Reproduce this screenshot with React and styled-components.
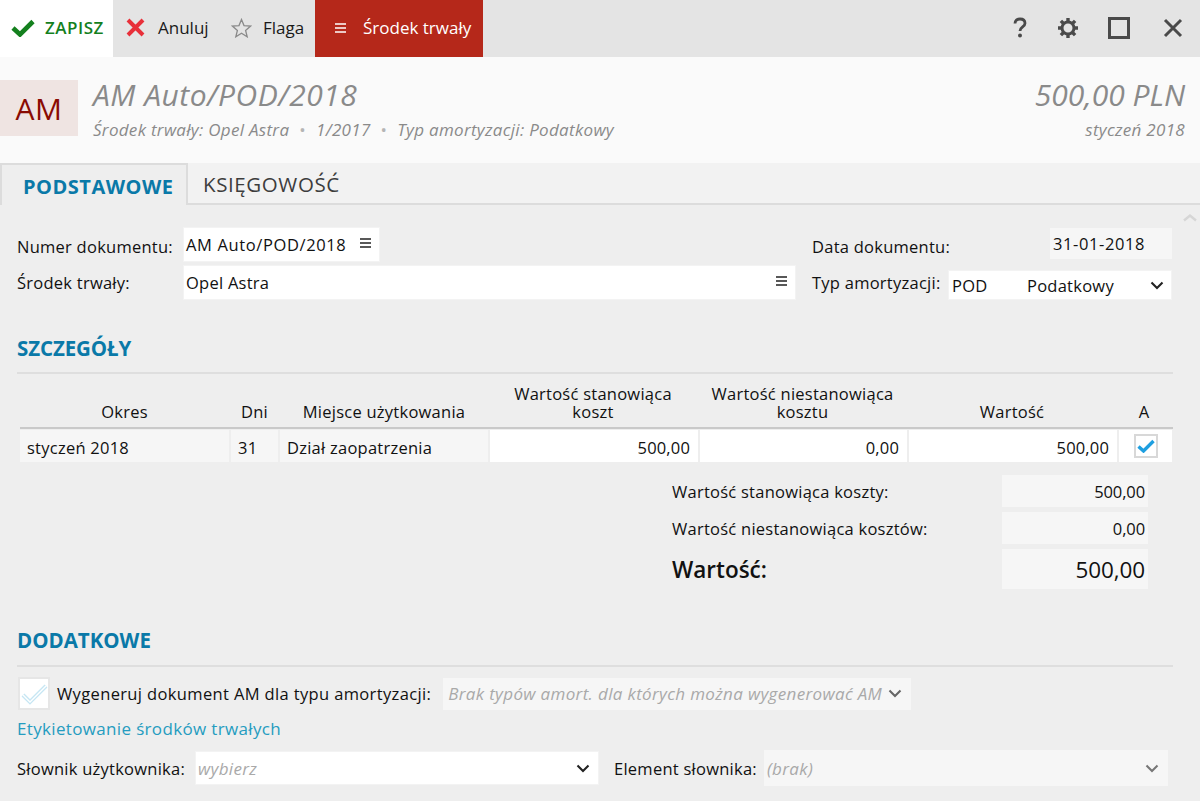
import React from "react";
import styled, { createGlobalStyle } from "styled-components";

const Global = createGlobalStyle`
  html, body { margin: 0; padding: 0; background: #eeeeee; }
  body { font-family: "Open Sans", "Noto Sans", sans-serif; font-size: 16.5px; letter-spacing: 0.25px; color: #111; }
  * { box-sizing: border-box; }
`;
const Page = styled.div`width: 1200px; height: 801px; overflow: hidden; background: #eee;`;
const Toolbar = styled.div`display: flex; height: 57px; background: #e4e4e4; align-items: stretch;`;
const ToolButton = styled.div`
  display: flex; align-items: center; height: 57px; font-size: 17px; letter-spacing: ${p => p.$ls || 0}px;
  width: ${p => p.$w}px; padding: 0 0 2px ${p => p.$pl}px; gap: ${p => p.$gap}px;
  background: ${p => p.$bg || "transparent"}; color: ${p => p.$color || "#1a1a1a"};
  font-weight: ${p => p.$weight || 400};
`;
const ToolRight = styled.div`margin-left: auto; display: flex; align-items: center; padding-bottom: 2px;`;
const IconSlot = styled.div`width: ${p => p.$w}px; display: flex; justify-content: center; align-items: center;`;
const Header = styled.div`height: 106px; background: #fafafa; display: flex; padding-top: 23px;`;
const Badge = styled.div`
  width: 78px; height: 56px; background: #efe4e2; color: #8a0b02; font-size: 30px; letter-spacing: 0.4px;
  display: flex; align-items: center; justify-content: center; flex: none;
`;
const HeaderMain = styled.div`margin-left: 15px; flex: 1; color: #8a8a8a; font-style: italic;`;
const HeaderSide = styled.div`padding-right: 15px; color: #8a8a8a; font-style: italic; text-align: right;`;
const Title = styled.div`font-size: 30px; line-height: 32px; margin-top: -1px; letter-spacing: ${p => p.$ls}px;`;
const Sub = styled.div`font-size: 17px; line-height: 22px; margin-top: 8px; letter-spacing: 0.3px;`;
const Dot = styled.span`margin: 0 10px; color: #b5b5b5; font-style: normal;`;
const Tabs = styled.div`height: 42px; background: #f2f2f2; border-bottom: 2px solid #dcdcdc; display: flex;`;
const ActiveTab = styled.div`
  height: 42px; width: 188px; display: flex; align-items: center; padding: 2px 0 0 21px;
  background: #eee; border: 2px solid #dcdcdc; border-bottom: none;
  color: #0a79a8; font-weight: 700; font-size: 20px; letter-spacing: 0.5px;
`;
const PlainTab = styled.div`
  height: 42px; display: flex; align-items: center; padding-left: 15px;
  color: #3d3d3d; font-size: 20.5px; letter-spacing: 0.6px;
`;
const Body = styled.div`position: relative; padding: 22px 28px 0 17px;`;
const ScrollUp = styled.svg`position: absolute; right: 2px; top: 8px;`;
const FormGrid = styled.div`display: grid; grid-template-columns: 166px 613px 16px 136px 224px; grid-template-rows: 38px 35px;`;
const Label = styled.div`
  display: flex; align-items: center; white-space: nowrap; margin-left: ${p => p.$ml || 0}px; letter-spacing: ${p => p.$ls ?? 0.25}px;
`;
const Field = styled.div`
  display: flex; align-items: center; justify-content: space-between; flex: none;
  background: ${p => p.$off ? "#f6f6f6" : "#fff"};
  border: 1px solid ${p => p.$off ? "#f6f6f6" : "#f3f3f3"};
  padding: 0 ${p => p.$pr ?? 8}px 0 ${p => p.$pl ?? 2}px;
  height: ${p => p.$h}px; width: ${p => p.$w}px; white-space: nowrap;
  margin-left: ${p => p.$ml || 0}px; margin-top: ${p => p.$mt || 0}px;
  color: ${p => p.$muted ? "#a9a9a9" : "#111"}; font-style: ${p => p.$muted ? "italic" : "normal"};
  font-size: ${p => p.$muted ? 17 : 16.5}px; letter-spacing: ${p => p.$ls ?? (p.$muted ? 0.34 : 0.25)}px;
`;
const FieldCell = styled.div`display: flex; align-items: ${p => p.$a || "flex-start"}; justify-content: ${p => p.$j || "flex-start"};`;
const ValueCode = styled.span`width: 75px; flex: none;`;
const ValueName = styled.span`flex: 1;`;
const BurgerIcon = styled.svg`flex: none; margin-bottom: ${p => p.$up || 0}px;`;
const Section = styled.div`
  color: #0a79a8; font-weight: 700; font-size: 20.5px; letter-spacing: ${p => p.$ls}px;
  margin-top: ${p => p.$mt}px; margin-right: -1px; height: ${p => p.$h}px; line-height: 24px; border-bottom: 2px solid #dedede;
`;
const TableHead = styled.div`
  display: grid; grid-template-columns: 209px 51px 208px 210px 209px 210px 54px; margin: 10px -1px 0 3px; height: 45px;
  border-bottom: 2px solid #c9c9c9; line-height: 18px;
`;
const HeadCell = styled.div`display: flex; align-items: flex-end; justify-content: center; text-align: center; padding-bottom: 6px;`;
const TableRow = styled.div`
  display: grid; grid-template-columns: 209px 47px 208px 208px 207px 208px 53px; column-gap: 2px; margin: 1px -1px 0 3px; height: 32px;
`;
const Cell = styled.div`
  display: flex; align-items: center; background: ${p => p.$white ? "#fff" : "#f6f6f6"};
  justify-content: ${p => p.$right ? "flex-end" : p.$center ? "center" : "flex-start"};
  padding: ${p => p.$center ? 0 : 3}px ${p => p.$right ? 8 : 6}px 0 7px; white-space: nowrap;
  letter-spacing: ${p => p.$right ? 0.17 : 0.25}px;
`;
const CheckBox = styled.div`
  width: 24px; height: 24px; background: #fff; border: 2px solid #d8d8d8; display: flex; align-items: center; justify-content: center;
`;
const Summary = styled.div`margin: 13px 0 0 655px; display: flex; flex-direction: column; width: 476px;`;
const SumRow = styled.div`
  display: grid; grid-template-columns: 330px 146px; align-items: center; height: ${p => p.$h}px; margin-bottom: ${p => p.$mb}px;
  font-size: ${p => p.$big ? 22.5 : 16.5}px; font-weight: ${p => p.$big ? 600 : 400}; letter-spacing: ${p => p.$big ? 0 : 0.25}px;
`;
const SumVal = styled.div`
  height: 100%; background: #f6f6f6; display: flex; align-items: center; justify-content: flex-end; padding-right: 3px;
  font-weight: 400; font-size: ${p => p.$big ? 22.5 : 16.5}px; letter-spacing: -0.1px;
`;
const GenRow = styled.div`display: flex; align-items: center; margin-top: 10px; height: 33px;`;
const BigCheck = styled.div`
  width: 32px; height: 33px; background: #fff; border: 2px solid #e6e6e6; display: flex; align-items: center; justify-content: center;
  margin: 0 7px 0 1px; flex: none;
`;
const Link = styled.div`color: #259cc0; margin-top: 1px; height: 36px; line-height: 36px; font-size: 17px; letter-spacing: 0.34px;`;
const DictRow = styled.div`display: flex; align-items: center; margin-top: 3px;`;

const Burger = ({ c = "#222", up }) => (
  <BurgerIcon $up={up} width="11" height="10" viewBox="0 0 11 10"><path d="M0 1h11M0 5h11M0 9h11" stroke={c} strokeWidth="1.4" /></BurgerIcon>
);
const Chev = ({ c = "#222" }) => (
  <svg width="14" height="9" viewBox="0 0 14 9"><path d="M1.5 1.5 7 7l5.5-5.5" fill="none" stroke={c} strokeWidth="2.1" /></svg>
);

export default function App() {
  return (
    <Page>
      <Global />
      <Toolbar>
        <ToolButton $w={113} $pl={11} $gap={10} $bg="#fff" $color="#14801e" $weight={600} $ls={0.5}>
          <svg width="24" height="18" viewBox="0 0 24 18"><path d="M2 9 9 15.5 22 2.5" fill="none" stroke="#14801e" strokeWidth="4.6" /></svg>
          <span>ZAPISZ</span>
        </ToolButton>
        <ToolButton $w={104} $pl={13} $gap={13}>
          <svg width="19" height="19" viewBox="0 0 19 19"><path d="M2 2 17 17M17 2 2 17" stroke="#e8303a" strokeWidth="4" /></svg>
          <span>Anuluj</span>
        </ToolButton>
        <ToolButton $w={98} $pl={14} $gap={11}>
          <svg width="21" height="20" viewBox="0 0 21 20"><path d="M10.5 1.5 13 7.6l6.6.5-5 4.3 1.6 6.4-5.7-3.5-5.7 3.5 1.6-6.4-5-4.3 6.6-.5z" fill="none" stroke="#8a8a8a" strokeWidth="1.3" /></svg>
          <span>Flaga</span>
        </ToolButton>
        <ToolButton $w={168} $pl={20} $gap={17} $bg="#b5281a" $color="#fff">
          <Burger c="#fff" />
          <span>Środek trwały</span>
        </ToolButton>
        <ToolRight>
          <IconSlot $w={48}>
            <svg width="14" height="21" viewBox="0 0 14 21"><path d="M2 6.5C2 3.5 4 2 7 2s5 1.6 5 4.2c0 3.8-5 3.6-5 7.8" fill="none" stroke="#4a4a4a" strokeWidth="2.8" /><circle cx="7" cy="18.5" r="2" fill="#4a4a4a" /></svg>
          </IconSlot>
          <IconSlot $w={48}>
            <svg width="22" height="22" viewBox="0 0 22 22">
              <circle cx="11" cy="11" r="6" fill="none" stroke="#4a4a4a" strokeWidth="3" />
              <path d="M11 1v4M11 17v4M1 11h4M17 11h4M3.9 3.9l2.9 2.9M15.2 15.2l2.9 2.9M18.1 3.9l-2.9 2.9M6.8 15.2l-2.9 2.9" stroke="#4a4a4a" strokeWidth="3.4" />
            </svg>
          </IconSlot>
          <IconSlot $w={53}>
            <svg width="22" height="22" viewBox="0 0 22 22"><rect x="1.5" y="1.5" width="19" height="19" fill="none" stroke="#4a4a4a" strokeWidth="3" /></svg>
          </IconSlot>
          <IconSlot $w={55}>
            <svg width="20" height="20" viewBox="0 0 20 20"><path d="M2 2 18 18M18 2 2 18" stroke="#4a4a4a" strokeWidth="3" /></svg>
          </IconSlot>
        </ToolRight>
      </Toolbar>

      <Header>
        <Badge>AM</Badge>
        <HeaderMain>
          <Title $ls={0.5}>AM Auto/POD/2018</Title>
          <Sub>Środek trwały: Opel Astra<Dot>•</Dot>1/2017<Dot>•</Dot>Typ amortyzacji: Podatkowy</Sub>
        </HeaderMain>
        <HeaderSide>
          <Title $ls={0}>500,00 PLN</Title>
          <Sub>styczeń 2018</Sub>
        </HeaderSide>
      </Header>

      <Tabs>
        <ActiveTab>PODSTAWOWE</ActiveTab>
        <PlainTab>KSIĘGOWOŚĆ</PlainTab>
      </Tabs>

      <Body>
        <ScrollUp width="16" height="9" viewBox="0 0 16 9"><path d="M2 7.5 8 2.5l6 5" fill="none" stroke="#d6d6d6" strokeWidth="2.4" /></ScrollUp>
        <FormGrid>
          <Label>Numer dokumentu:</Label>
          <FieldCell><Field $h={35} $w={197} $ls={0.62}>AM Auto/POD/2018<Burger up={3} /></Field></FieldCell>
          <div />
          <Label>Data dokumentu:</Label>
          <FieldCell $j="flex-end"><Field $off $h={31} $w={122} $mt={1} $ls={0.6}>31-01-2018</Field></FieldCell>
          <Label>Środek trwały:</Label>
          <FieldCell><Field $h={35} $w={613}>Opel Astra<Burger up={3} /></Field></FieldCell>
          <div />
          <Label>Typ amortyzacji:</Label>
          <FieldCell $a="flex-end"><Field $h={30} $w={224} $pl={3} $pr={7}>
            <ValueCode>POD</ValueCode><ValueName>Podatkowy</ValueName><Chev />
          </Field></FieldCell>
        </FormGrid>

        <Section $mt={36} $h={38} $ls={-0.1}>SZCZEGÓŁY</Section>
        <TableHead>
          <HeadCell>Okres</HeadCell>
          <HeadCell>Dni</HeadCell>
          <HeadCell>Miejsce użytkowania</HeadCell>
          <HeadCell>Wartość stanowiąca<br />koszt</HeadCell>
          <HeadCell>Wartość niestanowiąca<br />kosztu</HeadCell>
          <HeadCell>Wartość</HeadCell>
          <HeadCell>A</HeadCell>
        </TableHead>
        <TableRow>
          <Cell>styczeń 2018</Cell>
          <Cell>31</Cell>
          <Cell>Dział zaopatrzenia</Cell>
          <Cell $white $right>500,00</Cell>
          <Cell $white $right>0,00</Cell>
          <Cell $white $right>500,00</Cell>
          <Cell $white $center>
            <CheckBox><svg width="18" height="14" viewBox="0 0 18 14"><path d="M1.5 7.5 6.5 12 16.5 2" fill="none" stroke="#1e9fe0" strokeWidth="3.4" /></svg></CheckBox>
          </Cell>
        </TableRow>

        <Summary>
          <SumRow $h={32} $mb={5}><span>Wartość stanowiąca koszty:</span><SumVal>500,00</SumVal></SumRow>
          <SumRow $h={32} $mb={5}><span>Wartość niestanowiąca kosztów:</span><SumVal>0,00</SumVal></SumRow>
          <SumRow $h={40} $mb={0} $big><span>Wartość:</span><SumVal $big>500,00</SumVal></SumRow>
        </Summary>

        <Section $mt={39} $h={39} $ls={0}>DODATKOWE</Section>
        <GenRow>
          <BigCheck>
            <svg width="27" height="22" viewBox="0 0 27 22"><path d="M2 12 9 19 25 3" fill="none" stroke="#c6e6f3" strokeWidth="4" /><path d="M2 12 9 19 25 3" fill="none" stroke="#fff" strokeWidth="1.4" /></svg>
          </BigCheck>
          <Label $ls={0.36}>Wygeneruj dokument AM dla typu amortyzacji:</Label>
          <Field $off $muted $h={32} $w={468} $pl={4} $pr={8} $ml={12}>Brak typów amort. dla których można wygenerować AM<Chev c="#666" /></Field>
        </GenRow>
        <Link>Etykietowanie środków trwałych</Link>
        <DictRow>
          <Label>Słownik użytkownika:</Label>
          <Field $muted $h={34} $w={404} $ml={10}>wybierz<Chev /></Field>
          <Label $ml={15}>Element słownika:</Label>
          <Field $off $muted $h={36} $w={404} $ml={7}>(brak)<Chev c="#777" /></Field>
        </DictRow>
      </Body>
    </Page>
  );
}
